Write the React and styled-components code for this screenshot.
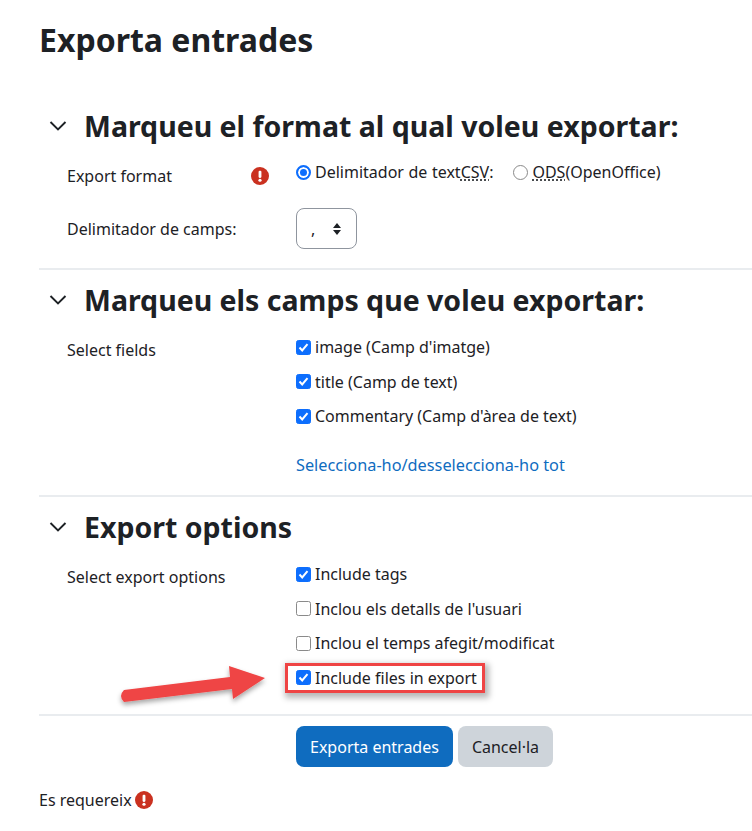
import React from "react";
import styled, { createGlobalStyle } from "styled-components";

const Global = createGlobalStyle`
  html, body { margin: 0; padding: 0; background: #fff; }
  body {
    font-family: "Noto Sans", "Open Sans", sans-serif;
    font-size: 16px;
    color: #1d2125;
  }
`;

const Page = styled.div`
  position: relative;
  width: 752px;
  height: 831px;
  overflow: hidden;
  padding: 21px 0 0 39px;
  box-sizing: border-box;
`;

const Title = styled.h1`
  margin: 0 0 37px;
  font-size: 32px;
  line-height: 38px;
  font-weight: 700;
`;

const Section = styled.section`
  height: ${(p) => p.$height}px;
  padding-top: 11px;
  box-sizing: border-box;
  border-bottom: 2px solid #e9ecef;
`;

const Head = styled.div`
  display: flex;
  align-items: center;
  height: 38px;
  padding-left: 10px;
  gap: 17px;
  margin-bottom: 16px;
`;

const Legend = styled.h2`
  margin: 0;
  font-size: 28.5px;
  line-height: 38px;
  font-weight: 700;
`;

const Row = styled.div`
  display: flex;
  align-items: flex-start;
  padding-left: 28px;
  margin-bottom: ${(p) => p.$gap || 0}px;
`;

const Label = styled.div`
  width: 229px;
  flex: none;
  line-height: 24px;
  padding-top: ${(p) => p.$top || 3}px;
  padding-right: 27px;
  display: flex;
  justify-content: space-between;
  align-items: center;
  box-sizing: border-box;
`;

const Field = styled.div`
  display: flex;
  flex-direction: column;
  gap: 10.5px;
`;

const Inline = styled.div`
  display: flex;
  align-items: center;
  gap: 20px;
  margin-top: -1px;
  word-spacing: 0.4px;
`;

const Option = styled.label`
  display: flex;
  align-items: center;
  gap: 4px;
  line-height: 24px;
  height: 24px;
  white-space: nowrap;
`;

const Abbr = styled.span`
  text-decoration: underline dotted;
  text-underline-offset: 2px;
`;

const Box = styled.span`
  width: 15px;
  height: 15px;
  box-sizing: border-box;
  border-radius: 2.5px;
  display: inline-flex;
  align-items: center;
  justify-content: center;
  background: ${(p) => (p.$on ? "#0d6efd" : "#fff")};
  border: 1px solid ${(p) => (p.$on ? "#0d6efd" : "#8a8a8a")};
`;

const Radio = styled.span`
  width: 15px;
  height: 15px;
  box-sizing: border-box;
  border-radius: 50%;
  background: ${(p) => (p.$on ? "#0d6efd" : "#fff")};
  border: ${(p) => (p.$on ? "2px solid #0d6efd" : "1px solid #8a8a8a")};
  box-shadow: ${(p) => (p.$on ? "inset 0 0 0 2px #fff" : "none")};
`;

const Select = styled.div`
  width: 61px;
  height: 41px;
  box-sizing: border-box;
  border: 1px solid #8f959e;
  border-radius: 8px;
  display: flex;
  align-items: center;
  justify-content: space-between;
  padding: 0 14px;
`;

const Link = styled.a`
  color: #0f6cbf;
  font-size: 16.3px;
  line-height: 24px;
  margin-top: 14.5px;
`;

const Marked = styled(Option)`
  align-self: flex-start;
  outline: 3px solid #ef4444;
  box-shadow: 2px 3px 6px 5px rgba(0, 0, 0, 0.28);
  padding: 0 5px 0 8px;
  margin-left: -8px;
  background: #fff;
`;

const Actions = styled.div`
  display: flex;
  gap: 5px;
  padding: 10px 0 0 257px;
`;

const Button = styled.button`
  height: 41px;
  border: 0;
  border-radius: 8px;
  font: inherit;
  padding: 0 14px;
  background: ${(p) => (p.$primary ? "#0f6cbf" : "#ced4da")};
  color: ${(p) => (p.$primary ? "#fff" : "#1d2125")};
`;

const Required = styled.div`
  display: flex;
  align-items: center;
  gap: 3px;
  margin-top: 21px;
  line-height: 24px;
`;

const Arrow = styled.svg`
  position: absolute;
  left: 110px;
  top: 655px;
  overflow: visible;
`;

const Chevron = () => (
  <svg width="18" height="18" viewBox="0 0 18 18" fill="none" stroke="#1d2125" strokeWidth="1.9">
    <path d="M1.5 5 9 12.5 16.5 5" />
  </svg>
);

const Alert = () => (
  <svg width="18" height="18" viewBox="0 0 19 19">
    <circle cx="9.5" cy="9.5" r="9.5" fill="#ca3120" />
    <rect x="8" y="4" width="3" height="7.5" rx="1.2" fill="#fff" />
    <circle cx="9.5" cy="14" r="1.7" fill="#fff" />
  </svg>
);

const Check = ({ on }) => (
  <Box $on={on}>
    {on && (
      <svg width="11" height="11" viewBox="0 0 11 11" fill="none" stroke="#fff" strokeWidth="2">
        <path d="M1.5 5.5 4.2 8.4 9.5 2.2" />
      </svg>
    )}
  </Box>
);

export default function App() {
  return (
    <Page>
      <Global />
      <Title>Exporta entrades</Title>
      <Section $height={174}>
        <Head>
          <Chevron />
          <Legend>Marqueu el format al qual voleu exportar:</Legend>
        </Head>
        <Row $gap={20}>
          <Label>
            Export format <Alert />
          </Label>
          <Field>
            <Inline>
              <Option>
                <Radio $on />
                <span>
                  Delimitador de text<Abbr>CSV</Abbr>:
                </span>
              </Option>
              <Option>
                <Radio />
                <span>
                  <Abbr>ODS</Abbr>(OpenOffice)
                </span>
              </Option>
            </Inline>
          </Field>
        </Row>
        <Row>
          <Label $top={9}>Delimitador de camps:</Label>
          <Field>
            <Select>
              <span>,</span>
              <svg width="10" height="14" viewBox="0 0 10 14" fill="#1d2125">
                <path d="M5 1 9 6H1zM5 13 1 8h8z" />
              </svg>
            </Select>
          </Field>
        </Row>
      </Section>
      <Section $height={227}>
        <Head>
          <Chevron />
          <Legend>Marqueu els camps que voleu exportar:</Legend>
        </Head>
        <Row>
          <Label>Select fields</Label>
          <Field>
            <Option>
              <Check on />
              image (Camp d'imatge)
            </Option>
            <Option>
              <Check on />
              title (Camp de text)
            </Option>
            <Option>
              <Check on />
              Commentary (Camp d'àrea de text)
            </Option>
            <Link>Selecciona-ho/desselecciona-ho tot</Link>
          </Field>
        </Row>
      </Section>
      <Section $height={219}>
        <Head>
          <Chevron />
          <Legend>Export options</Legend>
        </Head>
        <Row>
          <Label>Select export options</Label>
          <Field>
            <Option>
              <Check on />
              Include tags
            </Option>
            <Option>
              <Check />
              Inclou els detalls de l'usuari
            </Option>
            <Option>
              <Check />
              Inclou el temps afegit/modificat
            </Option>
            <Marked>
              <Check on />
              Include files in export
            </Marked>
          </Field>
        </Row>
      </Section>
      <Actions>
        <Button $primary>Exporta entrades</Button>
        <Button>Cancel·la</Button>
      </Actions>
      <Required>
        Es requereix <Alert />
      </Required>
      <Arrow width="160" height="60" viewBox="0 0 160 60">
        <defs>
          <filter id="arrowShadow" x="-20%" y="-30%" width="140%" height="180%">
            <feDropShadow dx="0" dy="3" stdDeviation="2.5" floodColor="#000" floodOpacity="0.35" />
          </filter>
        </defs>
        <path
          d="M14 35 L120 22 L119 11 L155 23 L123 44 L122 34 L14 47 Q8 41 14 35Z"
          fill="#ef4444"
          filter="url(#arrowShadow)"
        />
      </Arrow>
    </Page>
  );
}
